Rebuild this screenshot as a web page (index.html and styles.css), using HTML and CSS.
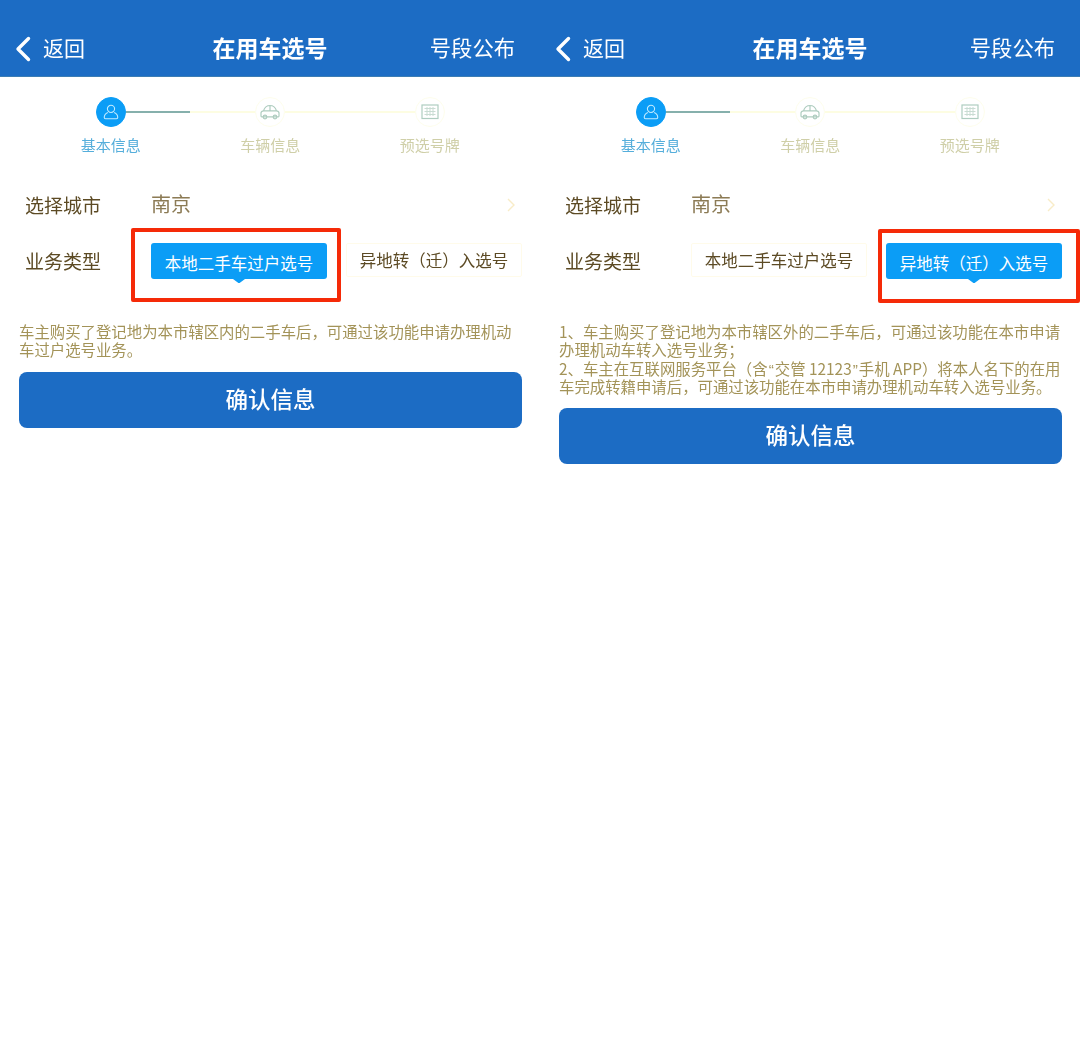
FILE: index.html
```html
<!DOCTYPE html>
<html lang="zh-CN">
<head>
<meta charset="utf-8">
<title>在用车选号</title>
<link rel="stylesheet" href="styles.css">
</head>
<body>
<div class="board">
  <section class="panel">
    <header class="topbar">
      <div class="back">
        <svg class="back-icon" width="16" height="26" viewBox="0 0 16 26"><polyline points="13.5,2.5 3,13 13.5,23.5"/></svg>
        <span>返回</span>
      </div>
      <h1 class="title">在用车选号</h1>
      <div class="action">号段公布</div>
    </header>
    <div class="track">
      <span class="dot dot-active"><svg width="18" height="18" viewBox="0 0 20 20"><circle cx="10" cy="6.500" r="4"/><path d="M6.500 10.500C4 11.500 2.500 14 2.500 16.200c0 .9.6 1.300 1.400 1.300h12.200c.8 0 1.400-.4 1.400-1.300 0-2.200-1.500-4.700-4-5.700"/></svg></span>
      <span class="link link-first"></span>
      <span class="dot"><svg width="22" height="16" viewBox="0 0 22 16"><path d="M2 12V9C2 7.800 3 7 4.500 6.800C5.500 3.500 7 1.500 11 1.500S16.500 3.500 17.500 6.800C19 7 20 7.800 20 9v3c0 .5-.3.8-.8.8H2.800C2.300 12.800 2 12.500 2 12ZM4.500 6.800H17.500M11 1.500V6.800"/><circle cx="6" cy="13" r="1.800"/><circle cx="16" cy="13" r="1.800"/></svg></span>
      <span class="link"></span>
      <span class="dot"><svg width="18" height="16" viewBox="0 0 18 16"><rect x="1" y="1" width="16" height="13.500"/><path class="fine" d="M3.500 4.500h11M3.500 7.500h11M3.500 10.500h11M6 3v9M9 3v9M12 3v9"/></svg></span>
    </div>
    <div class="labels">
      <span class="label-active">基本信息</span>
      <span>车辆信息</span>
      <span>预选号牌</span>
    </div>
    <div class="row row-city">
      <span class="field">选择城市</span>
      <span class="city">南京</span>
      <svg class="more" width="10" height="16" viewBox="0 0 10 16"><polyline points="2,2 8,8 2,14"/></svg>
    </div>
    <div class="row row-type">
      <span class="field">业务类型</span>
      <div class="tabs">
        <div class="tab tab-on">本地二手车过户选号<span class="mark mark-a"></span></div>
        <div class="tab">异地转（迁）入选号</div>
      </div>
    </div>
    <p class="note">车主购买了登记地为本市辖区内的二手车后，可通过该功能申请办理机动<br>车过户选号业务。</p>
    <button class="confirm">确认信息</button>
  </section>

  <section class="panel">
    <header class="topbar">
      <div class="back">
        <svg class="back-icon" width="16" height="26" viewBox="0 0 16 26"><polyline points="13.5,2.5 3,13 13.5,23.5"/></svg>
        <span>返回</span>
      </div>
      <h1 class="title">在用车选号</h1>
      <div class="action">号段公布</div>
    </header>
    <div class="track">
      <span class="dot dot-active"><svg width="18" height="18" viewBox="0 0 20 20"><circle cx="10" cy="6.500" r="4"/><path d="M6.500 10.500C4 11.500 2.500 14 2.500 16.200c0 .9.6 1.300 1.400 1.300h12.200c.8 0 1.400-.4 1.400-1.300 0-2.200-1.500-4.700-4-5.700"/></svg></span>
      <span class="link link-first"></span>
      <span class="dot"><svg width="22" height="16" viewBox="0 0 22 16"><path d="M2 12V9C2 7.800 3 7 4.500 6.800C5.500 3.500 7 1.500 11 1.500S16.500 3.500 17.500 6.800C19 7 20 7.800 20 9v3c0 .5-.3.8-.8.8H2.800C2.300 12.800 2 12.500 2 12ZM4.500 6.800H17.500M11 1.500V6.800"/><circle cx="6" cy="13" r="1.800"/><circle cx="16" cy="13" r="1.800"/></svg></span>
      <span class="link"></span>
      <span class="dot"><svg width="18" height="16" viewBox="0 0 18 16"><rect x="1" y="1" width="16" height="13.500"/><path class="fine" d="M3.500 4.500h11M3.500 7.500h11M3.500 10.500h11M6 3v9M9 3v9M12 3v9"/></svg></span>
    </div>
    <div class="labels">
      <span class="label-active">基本信息</span>
      <span>车辆信息</span>
      <span>预选号牌</span>
    </div>
    <div class="row row-city">
      <span class="field">选择城市</span>
      <span class="city">南京</span>
      <svg class="more" width="10" height="16" viewBox="0 0 10 16"><polyline points="2,2 8,8 2,14"/></svg>
    </div>
    <div class="row row-type">
      <span class="field">业务类型</span>
      <div class="tabs">
        <div class="tab">本地二手车过户选号</div>
        <div class="tab tab-on">异地转（迁）入选号<span class="mark mark-b"></span></div>
      </div>
    </div>
    <p class="note">1、车主购买了登记地为本市辖区外的二手车后，可通过该功能在本市申请<br>办理机动车转入选号业务；<br>2、车主在互联网服务平台（含<span class="latin">“</span>交管 12123<span class="latin">”</span>手机 APP）将本人名下的在用<br>车完成转籍申请后，可通过该功能在本市申请办理机动车转入选号业务。</p>
    <button class="confirm">确认信息</button>
  </section>
</div>
</body>
</html>
```
FILE: styles.css
```css
* { box-sizing: border-box; }

html, body {
  margin: 0;
  background: #fff;
}

body {
  font-family: "Noto Sans CJK SC", "Noto Sans", sans-serif;
  color: #5c4a24;
}

.board {
  display: grid;
  grid-template-columns: 540px 540px;
  height: 1050px;
  overflow: hidden;
}

.panel {
  display: flex;
  flex-direction: column;
  align-items: flex-start;
  filter: blur(0.3px);
}

.topbar {
  display: grid;
  grid-template-columns: 1fr auto 1fr;
  align-items: center;
  width: 100%;
  height: 77px;
  padding: 18px 25px 0 25px;
  background: #1c6cc4;
  border-bottom: 1px solid #3c7db4;
  color: #fff;
}

.back {
  display: flex;
  align-items: center;
  gap: 12px;
  margin-left: -10px;
  font-size: 21px;
  line-height: 54px;
}

.back-icon {
  margin-top: 4px;
  fill: none;
  stroke: #fff;
  stroke-width: 3.4;
  stroke-linecap: round;
  stroke-linejoin: round;
}

.title {
  margin: 0;
  font-size: 23px;
  font-weight: 700;
  line-height: 54px;
}

.action {
  justify-self: end;
  font-size: 21.300px;
  line-height: 54px;
}

.track {
  display: flex;
  align-items: center;
  margin: 20px 0 0 96px;
}

.dot {
  display: flex;
  flex: none;
  align-items: center;
  justify-content: center;
  width: 30px;
  height: 30px;
  border: 1px solid #fdfdec;
  border-radius: 50%;
  background: #fff;
}

.dot svg {
  fill: none;
  stroke: #afcdc0;
  stroke-width: 1.2;
}

.dot svg .fine {
  stroke: #c9dcd3;
  stroke-width: 1;
}

.dot-active {
  border-color: #0b9df6;
  background: #0b9df6;
}

.dot-active svg {
  stroke: #c4ecff;
}

.link {
  flex: none;
  width: 130px;
  height: 2px;
  background: #fdfde2;
}

.link-first {
  width: 129px;
  background: linear-gradient(to right, #86b0ac 64px, #fdfde2 64px);
}

.labels {
  display: grid;
  grid-template-columns: repeat(3, 159.500px);
  margin: 8px 0 0 31px;
  font-size: 15px;
  line-height: 20px;
  text-align: center;
  color: #cfcfa8;
}

.label-active {
  color: #55aedb;
}

.row {
  display: flex;
  padding-left: 25px;
}

.row-city {
  align-items: center;
  width: 100%;
  height: 40px;
  margin-top: 30px;
  padding-right: 24px;
}

.field {
  flex: none;
  width: 126px;
  font-size: 19px;
  line-height: 36px;
}

.city {
  flex: 1;
  margin-top: -3px;
  font-size: 20px;
  color: #8c7b55;
}

.more {
  fill: none;
  stroke: #f8ecc8;
  stroke-width: 1.400;
}

.row-type {
  margin-top: 18px;
}

.tabs {
  display: grid;
  grid-template-columns: 176px 176px;
  column-gap: 19px;
  align-items: start;
}

.tab {
  position: relative;
  height: 34px;
  border: 1px solid #fffbea;
  border-radius: 2px;
  font-size: 16.500px;
  line-height: 32px;
  text-align: center;
  white-space: nowrap;
}

.tab-on {
  height: 36px;
  padding-top: 4px;
  border: 0;
  border-radius: 3px;
  background: #0b9df6;
  color: #fff;
}

.tab-on::after {
  content: "";
  position: absolute;
  left: 50%;
  bottom: -4px;
  width: 12px;
  height: 4px;
  margin-left: -6px;
  background: #0b9df6;
  clip-path: polygon(0 0, 100% 0, 55% 100%, 45% 100%);
}

.mark {
  position: absolute;
  border: 4px solid #f52a08;
  border-radius: 2px;
  pointer-events: none;
}

.mark-a {
  inset: -15px -14px -23px -20px;
}

.mark-b {
  inset: -14px -18px -24px -8px;
}

.note {
  margin: 43px 0 0 19px;
  font-size: 15.400px;
  line-height: 18.300px;
  white-space: nowrap;
  color: #a39358;
}

.latin {
  padding: 0 1px;
  font-family: "Liberation Sans", sans-serif;
  line-height: 0;
}

.confirm {
  width: 503px;
  height: 56px;
  margin: 13px 0 0 19px;
  padding: 0 0 4px;
  border: 0;
  border-radius: 8px;
  background: #1c6cc4;
  color: #fff;
  font-family: inherit;
  font-size: 22.500px;
  font-weight: 500;
}
```
